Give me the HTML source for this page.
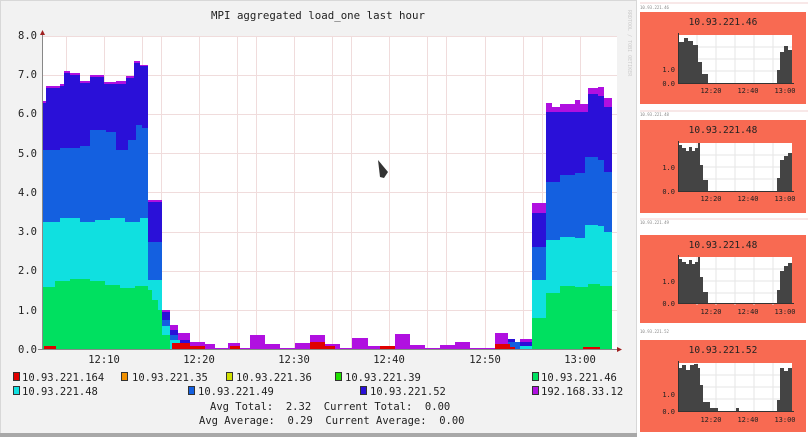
<!DOCTYPE html>
<html><head><meta charset="utf-8"><style>
body{margin:0;width:812px;height:437px;background:#fff;overflow:hidden;font-family:"DejaVu Sans Mono","Liberation Mono",monospace;}
.t{font-family:"DejaVu Sans Mono","Liberation Mono",monospace;}
</style></head><body>
<svg width="812" height="437" viewBox="0 0 812 437" xmlns="http://www.w3.org/2000/svg" style="position:absolute;left:0;top:0">
<rect x="0" y="0" width="637" height="437" fill="#f2f2f2"/>
<rect x="0.5" y="0.5" width="636" height="434" fill="none" stroke="#d8d8d8"/>
<rect x="0" y="433" width="637" height="4" fill="#a8a8a8"/>
<rect x="42" y="36" width="575" height="313" fill="#fff"/>
<g stroke="#f0dcdc" stroke-width="1">
<line x1="42" y1="75.5" x2="617" y2="75.5"/><line x1="42" y1="114.5" x2="617" y2="114.5"/><line x1="42" y1="153.5" x2="617" y2="153.5"/><line x1="42" y1="192.5" x2="617" y2="192.5"/><line x1="42" y1="232.5" x2="617" y2="232.5"/><line x1="42" y1="271.5" x2="617" y2="271.5"/><line x1="42" y1="310.5" x2="617" y2="310.5"/><line x1="42" y1="36.5" x2="617" y2="36.5"/>
<line x1="104.5" y1="36" x2="104.5" y2="349"/><line x1="199.5" y1="36" x2="199.5" y2="349"/><line x1="294.5" y1="36" x2="294.5" y2="349"/><line x1="389.5" y1="36" x2="389.5" y2="349"/><line x1="485.5" y1="36" x2="485.5" y2="349"/><line x1="580.5" y1="36" x2="580.5" y2="349"/>
<line x1="66.5" y1="36" x2="66.5" y2="349"/><line x1="142.5" y1="36" x2="142.5" y2="349"/><line x1="161.5" y1="36" x2="161.5" y2="349"/><line x1="237.5" y1="36" x2="237.5" y2="349"/><line x1="256.5" y1="36" x2="256.5" y2="349"/><line x1="332.5" y1="36" x2="332.5" y2="349"/><line x1="351.5" y1="36" x2="351.5" y2="349"/><line x1="427.5" y1="36" x2="427.5" y2="349"/><line x1="446.5" y1="36" x2="446.5" y2="349"/><line x1="523.5" y1="36" x2="523.5" y2="349"/><line x1="542.5" y1="36" x2="542.5" y2="349"/>
</g>
<path fill="#b010e0" d="M42,349 V101 H46 V86 H60 V84 H64 V71 H70 V73 H80 V81 H90 V75 H104 V82 H116 V81 H126 V76 H134 V61 H140 V65 H148 V200 H162 V310 H170 V325 H178 V333 H190 V342 H205 V344 H215 V348 H228 V343 H240 V348 H250 V335 H265 V344 H280 V348 H295 V343 H310 V335 H325 V344 H340 V348 H352 V338 H368 V346 H395 V334 H410 V345 H425 V348 H440 V345 H455 V342 H470 V348 H495 V333 H508 V345 H520 V339 H532 V203 H546 V103 H552 V107 H560 V104 H575 V100 H580 V104 H588 V88 H598 V87 H604 V98 H612 V349 Z"/>
<path fill="#2a10d8" d="M42,349 V103 H46 V88 H60 V86 H64 V73 H70 V75 H80 V83 H90 V77 H104 V84 H116 V84 H126 V78 H134 V63 H140 V66 H148 V202 H162 V312 H170 V330 H178 V340 H190 V349 H495 V345 H508 V339 H515 V342 H532 V213 H546 V112 H588 V94 H598 V96 H604 V107 H612 V349 Z"/>
<path fill="#1460e0" d="M42,349 V150 H60 V148 H80 V146 H90 V130 H106 V132 H116 V150 H128 V140 H136 V125 H142 V128 H148 V242 H162 V320 H170 V335 H178 V345 H190 V349 H508 V342 H520 V346 H532 V247 H546 V182 H560 V175 H575 V173 H585 V157 H598 V160 H604 V172 H612 V349 Z"/>
<path fill="#10e0e0" d="M42,349 V222 H60 V218 H80 V222 H95 V220 H110 V218 H125 V222 H140 V218 H148 V280 H162 V326 H170 V340 H180 V349 H520 V346 H532 V280 H546 V240 H560 V237 H575 V238 H585 V225 H598 V226 H604 V232 H612 V349 Z"/>
<path fill="#00e060" d="M42,349 V287 H55 V281 H70 V279 H90 V281 H105 V285 H120 V288 H135 V286 H148 V290 H152 V300 H158 V310 H162 V335 H170 V349 H532 V318 H546 V293 H560 V286 H575 V287 H588 V284 H600 V286 H612 V349 Z"/>
<path fill="#e00000" d="M44,349 V346 H56 V349 Z M172,349 V343 H190 V346 H205 V349 Z M230,349 V346 H240 V349 Z M310,349 V342 H325 V346 H335 V349 Z M380,349 V346 H395 V349 Z M495,349 V344 H510 V347 H515 V349 Z M583,349 V347 H600 V349 Z"/>
<line x1="42.5" y1="33" x2="42.5" y2="350" stroke="#888"/>
<line x1="38" y1="349.5" x2="618" y2="349.5" stroke="#888"/>
<path d="M40,35 L42.5,30 L45,35 Z" fill="#a02020"/>
<path d="M617,347 L622,349.5 L617,352 Z" fill="#a02020"/>
<g class="t" font-size="10.5" fill="#222">
<text x="211" y="19" font-size="11" textLength="214" lengthAdjust="spacingAndGlyphs">MPI aggregated load_one last hour</text>
<g text-anchor="end"><text x="37" y="39">8.0</text><text x="37" y="78">7.0</text><text x="37" y="117">6.0</text><text x="37" y="157">5.0</text><text x="37" y="196">4.0</text><text x="37" y="235">3.0</text><text x="37" y="274">2.0</text><text x="37" y="314">1.0</text><text x="37" y="353">0.0</text></g>
<g text-anchor="middle"><text x="104" y="363">12:10</text><text x="199" y="363">12:20</text><text x="294" y="363">12:30</text><text x="389" y="363">12:40</text><text x="485" y="363">12:50</text><text x="580" y="363">13:00</text></g>
<text x="22" y="381">10.93.221.164</text><text x="132" y="381">10.93.221.35</text><text x="236" y="381">10.93.221.36</text><text x="345" y="381">10.93.221.39</text><text x="541" y="381">10.93.221.46</text>
<text x="22" y="395">10.93.221.48</text><text x="198" y="395">10.93.221.49</text><text x="370" y="395">10.93.221.52</text><text x="541" y="395">192.168.33.12</text>
<text x="210" y="410" xml:space="preserve">Avg Total:  2.32  Current Total:  0.00</text>
<text x="199" y="424" xml:space="preserve">Avg Average:  0.29  Current Average:  0.00</text>
</g>
<g stroke="#333" stroke-width="1">
<rect x="13.5" y="372.5" width="6" height="8" fill="#e00000"/><rect x="121.5" y="372.5" width="6" height="8" fill="#f09000"/><rect x="226.5" y="372.5" width="6" height="8" fill="#d0e000"/><rect x="335.5" y="372.5" width="6" height="8" fill="#20e000"/><rect x="532.5" y="372.5" width="6" height="8" fill="#00e060"/>
<rect x="13.5" y="386.5" width="6" height="8" fill="#10e0e0"/><rect x="188.5" y="386.5" width="6" height="8" fill="#1460e0"/><rect x="360.5" y="386.5" width="6" height="8" fill="#2a10d8"/><rect x="532.5" y="386.5" width="6" height="8" fill="#b010e0"/>
</g>
<path d="M378,160 L388,172 L384,178 L380,177 Z" fill="#333"/>
<rect x="637" y="0" width="175" height="437" fill="#fff"/>
<text x="628" y="10" font-size="5" fill="#ccc" transform="rotate(90 628 10)" class="t">RRDTOOL / TOBI OETIKER</text>
</svg>

<svg width="812" height="437" style="position:absolute;left:0;top:0" xmlns="http://www.w3.org/2000/svg">
<defs>
<g id="grid">
<g stroke="#e6e6e6"><line x1="0" y1="12" x2="114" y2="12"/><line x1="0" y1="24" x2="114" y2="24"/><line x1="0" y1="36" x2="114" y2="36"/><line x1="19" y1="0" x2="19" y2="48"/><line x1="38" y1="0" x2="38" y2="48"/><line x1="57" y1="0" x2="57" y2="48"/><line x1="76" y1="0" x2="76" y2="48"/><line x1="95" y1="0" x2="95" y2="48"/></g>
</g>
</defs>
<g font-family="DejaVu Sans Mono, Liberation Mono, monospace">
<g transform="translate(640,12)">
<rect width="166" height="92" fill="#f86a52"/>
<text x="83" y="13" font-size="9.5" text-anchor="middle" fill="#222">10.93.221.46</text>
<rect x="38" y="23" width="114" height="48" fill="#fff"/>
<g transform="translate(38,23)"><use href="#grid"/></g>
<path fill="#444" d="M38,71 V30 H44 V26 H48 V29 H53 V33 H58 V50 H62 V62 H68 V71 Z M137,71 V58 H140 V40 H144 V34 H148 V38 H152 V71 Z"/>
<line x1="38" y1="71.5" x2="154" y2="71.5" stroke="#333"/><line x1="38.5" y1="21" x2="38.5" y2="72" stroke="#333"/>
<g font-size="7" fill="#222"><text x="35" y="60" text-anchor="end">1.0</text><text x="35" y="74" text-anchor="end">0.0</text><text x="71" y="81" text-anchor="middle">12:20</text><text x="108" y="81" text-anchor="middle">12:40</text><text x="145" y="81" text-anchor="middle">13:00</text></g>
</g>
<text x="640" y="9" font-size="4" fill="#888">10.93.221.46</text>
<line x1="640" y1="3" x2="808" y2="3" stroke="#f0d0d0"/>
<g transform="translate(640,120)">
<rect width="166" height="93" fill="#f86a52"/>
<text x="83" y="13" font-size="9.5" text-anchor="middle" fill="#222">10.93.221.48</text>
<rect x="38" y="23" width="114" height="48" fill="#fff"/>
<g transform="translate(38,23)"><use href="#grid"/></g>
<path fill="#444" d="M38,71 V25 H42 V28 H46 V31 H49 V27 H52 V31 H55 V28 H58 V23 H60 V45 H63 V60 H68 V71 Z M137,71 V58 H140 V40 H144 V36 H148 V33 H152 V71 Z"/>
<line x1="38" y1="71.5" x2="154" y2="71.5" stroke="#333"/><line x1="38.5" y1="21" x2="38.5" y2="72" stroke="#333"/>
<g font-size="7" fill="#222"><text x="35" y="50" text-anchor="end">1.0</text><text x="35" y="74" text-anchor="end">0.0</text><text x="71" y="81" text-anchor="middle">12:20</text><text x="108" y="81" text-anchor="middle">12:40</text><text x="145" y="81" text-anchor="middle">13:00</text></g>
</g>
<text x="640" y="116" font-size="4" fill="#888">10.93.221.48</text>
<line x1="640" y1="111" x2="808" y2="111" stroke="#f0d0d0"/>
<g transform="translate(640,235)">
<rect width="166" height="88" fill="#f86a52"/>
<text x="83" y="13" font-size="9.5" text-anchor="middle" fill="#222">10.93.221.48</text>
<rect x="38" y="22" width="114" height="46" fill="#fff"/>
<g transform="translate(38,22)"><use href="#grid"/></g>
<path fill="#444" d="M38,68 V24 H42 V27 H46 V29 H49 V25 H52 V29 H55 V27 H58 V22 H60 V42 H63 V57 H68 V68 Z M137,68 V55 H140 V36 H144 V31 H148 V28 H152 V68 Z"/>
<line x1="38" y1="68.5" x2="154" y2="68.5" stroke="#333"/><line x1="38.5" y1="20" x2="38.5" y2="69" stroke="#333"/>
<g font-size="7" fill="#222"><text x="35" y="49" text-anchor="end">1.0</text><text x="35" y="71" text-anchor="end">0.0</text><text x="71" y="79" text-anchor="middle">12:20</text><text x="108" y="79" text-anchor="middle">12:40</text><text x="145" y="79" text-anchor="middle">13:00</text></g>
</g>
<text x="640" y="224" font-size="4" fill="#888">10.93.221.49</text>
<line x1="640" y1="219" x2="808" y2="219" stroke="#f0d0d0"/>
<g transform="translate(640,340)">
<rect width="166" height="92" fill="#f86a52"/>
<text x="83" y="13" font-size="9.5" text-anchor="middle" fill="#222">10.93.221.52</text>
<rect x="38" y="23" width="114" height="48" fill="#fff"/>
<g transform="translate(38,23)"><use href="#grid"/></g>
<path fill="#444" d="M38,71 V28 H42 V25 H46 V30 H50 V25 H54 V24 H58 V28 H60 V45 H63 V62 H70 V68 H78 V71 Z M96,71 V68 H99 V71 Z M137,71 V60 H140 V28 H144 V31 H148 V28 H152 V71 Z"/>
<line x1="38" y1="71.5" x2="154" y2="71.5" stroke="#333"/><line x1="38.5" y1="21" x2="38.5" y2="72" stroke="#333"/>
<g font-size="7" fill="#222"><text x="35" y="57" text-anchor="end">1.0</text><text x="35" y="74" text-anchor="end">0.0</text><text x="71" y="82" text-anchor="middle">12:20</text><text x="108" y="82" text-anchor="middle">12:40</text><text x="145" y="82" text-anchor="middle">13:00</text></g>
</g>
<text x="640" y="333" font-size="4" fill="#888">10.93.221.52</text>
</g>
</svg>
</body></html>
